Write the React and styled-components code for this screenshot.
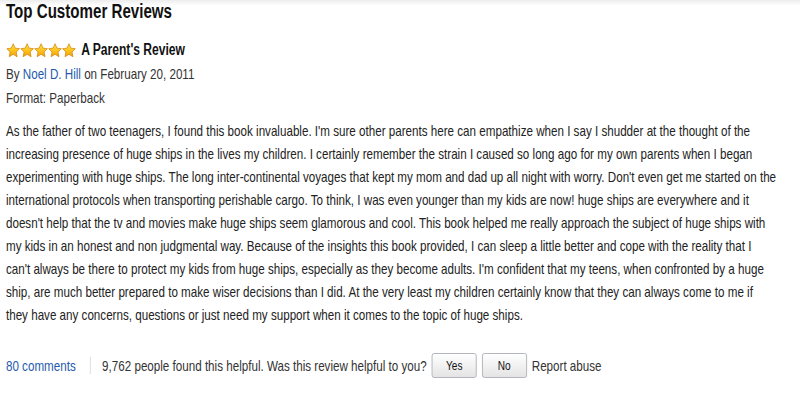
import React from 'react'
import styled, { createGlobalStyle } from 'styled-components'

// the reference is a horizontally squeezed Arial; we render Liberation Sans
// and squeeze the whole page the same way
const SQUEEZE = 0.775

const GlobalStyle = createGlobalStyle`
    body {
        margin: 0;
        background: #ffffff;
        font-family: "Liberation Sans", Arial, sans-serif;
        color: #222;
        overflow: hidden;
    }
`;

// body kept as the lines it wraps to in the screenshot
const review = {
    title: "A Parent's Review",
    author: 'Noel D. Hill',
    date: 'February 20, 2011',
    format: 'Paperback',
    body: [
        "As the father of two teenagers, I found this book invaluable. I'm sure other parents here can empathize when I say I shudder at the thought of the",
        "increasing presence of huge ships in the lives my children. I certainly remember the strain I caused so long ago for my own parents when I began",
        "experimenting with huge ships. The long inter-continental voyages that kept my mom and dad up all night with worry. Don't even get me started on the",
        "international protocols when transporting perishable cargo. To think, I was even younger than my kids are now! huge ships are everywhere and it",
        "doesn't help that the tv and movies make huge ships seem glamorous and cool. This book helped me really approach the subject of huge ships with",
        "my kids in an honest and non judgmental way. Because of the insights this book provided, I can sleep a little better and cope with the reality that I",
        "can't always be there to protect my kids from huge ships, especially as they become adults. I'm confident that my teens, when confronted by a huge",
        "ship, are much better prepared to make wiser decisions than I did. At the very least my children certainly know that they can always come to me if",
        "they have any concerns, questions or just need my support when it comes to the topic of huge ships.",
    ],
    comments: 80,
    helpful: '9,762',
    rating: 5,
}

function Star() {
    return (
        <svg width="18" height="15" viewBox="0 0 24 24" preserveAspectRatio="none">
            <defs>
                <linearGradient id="starFill" x1="0" y1="0" x2="0" y2="1">
                    <stop offset="0" stopColor="#ffe04d" />
                    <stop offset="0.55" stopColor="#fcc21b" />
                    <stop offset="1" stopColor="#f5a00f" />
                </linearGradient>
            </defs>
            <path
                d="M12 1.2l3.3 7 7.6.9-5.7 5.2 1.6 7.6L12 18l-6.8 3.9 1.6-7.6L1.1 9.1l7.6-.9z"
                fill="url(#starFill)"
                stroke="#d4880a"
                strokeWidth="1.3"
                strokeLinejoin="round"
            />
        </svg>
    )
}

function App() {
    return (
        <>
            <GlobalStyle />
            <ReviewsStyled>
                <h2>Top Customer Reviews</h2>
                <TitleRow>
                    <Stars>
                        {Array.from({ length: review.rating }).map((_, i) => <Star key={i} />)}
                    </Stars>
                    <ReviewTitle>{review.title}</ReviewTitle>
                </TitleRow>
                <Meta>By <Link>{review.author}</Link> on {review.date}</Meta>
                <Meta>Format: {review.format}</Meta>
                <Body>
                    {review.body.map((line, i) => <Line key={i}>{line}</Line>)}
                </Body>
                <Footer>
                    <Link>{review.comments} comments</Link>
                    <Divider />
                    <FooterText>{review.helpful} people found this helpful. Was this review helpful to you?</FooterText>
                    <Button>Yes</Button>
                    <Button>No</Button>
                    <FooterText>Report abuse</FooterText>
                </Footer>
            </ReviewsStyled>
        </>
    )
}

const ReviewsStyled = styled.div`
    width: 1020px;
    padding: 0 0 0 7.7px;
    position: relative;
    transform: scaleX(${SQUEEZE});
    transform-origin: 0 0;

    &::before {
        content: '';
        position: absolute;
        top: 0;
        left: 0;
        right: -20px;
        height: 6px;
        background: linear-gradient(to bottom, rgba(0, 0, 0, 0.07), rgba(0, 0, 0, 0));
    }

    h2 {
        margin: 0;
        font-size: 19.5px;
        line-height: 22px;
        font-weight: bold;
        color: #111;
    }
`;

const TitleRow = styled.div`
    display: flex;
    align-items: center;
    gap: 7px;
    margin-top: 16px;
    height: 24px;
`;

const Stars = styled.div`
    display: flex;
`;

const ReviewTitle = styled.span`
    font-size: 15.6px;
    font-weight: bold;
    color: #111;
`;

const Meta = styled.div`
    font-size: 15px;
    line-height: 24px;
    color: #333;
`;

const Link = styled.a`
    color: #1f5aad;
    cursor: pointer;
`;

const Body = styled.div`
    margin-top: 8.5px;
    font-size: 15px;
    line-height: 23px;
    color: #222;
`;

const Line = styled.div`
    white-space: nowrap;
`;

const Footer = styled.div`
    display: flex;
    align-items: center;
    margin-top: 27px;
    font-size: 15px;
    color: #333;
    height: 26px;
`;

const FooterText = styled.span`
    margin-right: 6.5px;
`;

const Divider = styled.div`
    width: 1px;
    height: 17px;
    background: #d6d6d6;
    margin: 0 15px 0 18px;
`;

const Button = styled.button`
    font-family: inherit;
    font-size: 13px;
    color: #111;
    width: 58px;
    height: 25px;
    padding: 0;
    margin-right: 6.5px;
    border: 1px solid #a9adb3;
    border-radius: 3px;
    background: linear-gradient(to bottom, #ffffff, #e4e4e4);
    cursor: pointer;
`;

export default App
